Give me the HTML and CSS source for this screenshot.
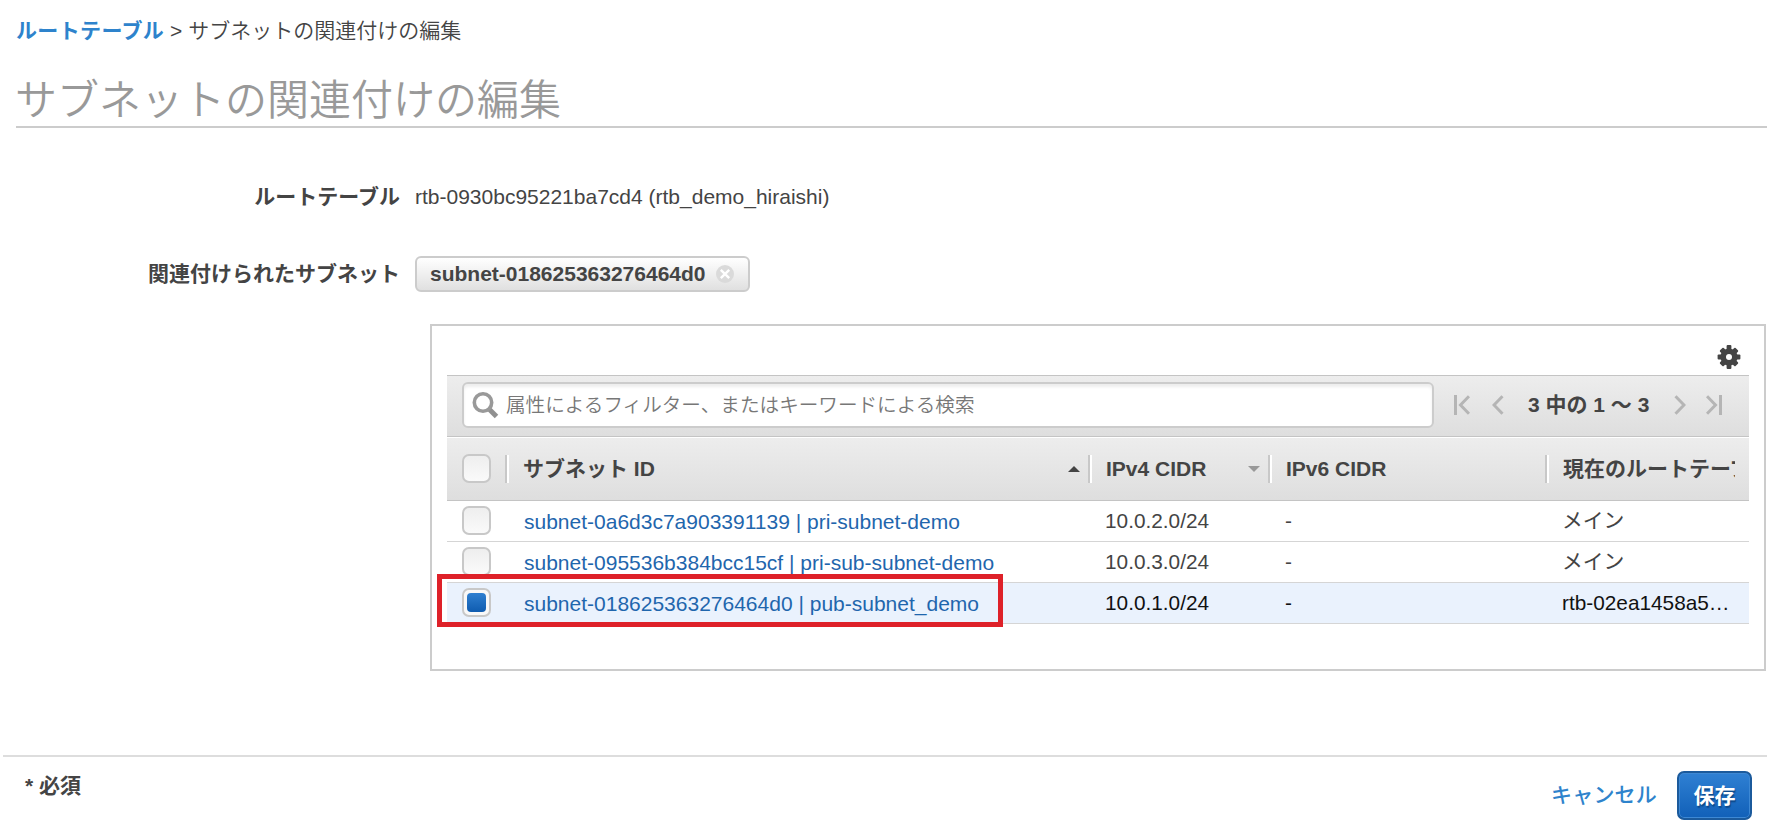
FILE: index.html
```html
<!DOCTYPE html>
<html lang="ja">
<head>
  <meta charset="UTF-8" />
  <meta name="viewport" content="width=device-width, initial-scale=1" />
  <title>サブネットの関連付けの編集</title>
  <link rel="stylesheet" href="styles.css">
</head>
<body>

  <main class="pagina">
    <nav class="breadcrumb"><a href="#">ルートテーブル</a> &gt; <span>サブネットの関連付けの編集</span></nav>
    <h1>サブネットの関連付けの編集</h1>

    <div class="campo">
      <div class="label">ルートテーブル</div>
      <div class="valor">rtb-0930bc95221ba7cd4 (rtb_demo_hiraishi)</div>
    </div>

    <div class="campo campo-tag">
      <div class="label">関連付けられたサブネット</div>
      <div class="tag">
        <span>subnet-018625363276464d0</span>
        <svg width="18" height="18" viewBox="0 0 18 18">
          <circle cx="9" cy="9" r="9" fill="#dadada" />
          <path d="M4.800 4.800l8.400 8.400M13.200 4.800l-8.400 8.400" stroke="#fff" stroke-width="2.4" />
        </svg>
      </div>
    </div>

    <section class="panel">
      <div class="panel-top">
        <svg width="24" height="26" viewBox="-12 -13 24 26">
          <g fill="#444">
            <rect x="-2.4" y="-12" width="4.8" height="24" rx="1" />
            <rect x="-11.4" y="-2.5" width="22.8" height="5" rx="1" />
            <rect x="-2.6" y="-11" width="5.2" height="22" rx="1" transform="rotate(45)" />
            <rect x="-2.6" y="-11" width="5.2" height="22" rx="1" transform="rotate(-45)" />
          </g>
          <circle r="5.8" fill="none" stroke="#444" stroke-width="5.6" />
          <circle r="3" fill="#fff" />
        </svg>
      </div>

      <div class="toolbar">
        <div class="buscador">
          <svg width="27" height="28" viewBox="0 0 27 28">
            <path d="M16.5 17.5l8 8" stroke="#909090" stroke-width="5" />
            <circle cx="11" cy="11.5" r="8.7" fill="none" stroke="#999" stroke-width="3.6" />
          </svg>
          <input type="text" placeholder="属性によるフィルター、またはキーワードによる検索" />
        </div>
        <div class="paginacion">
          <svg class="primero" width="16" height="20" viewBox="0 0 16 20"><path d="M1.5 0v20M15 1.2L6.5 10l8.5 8.8" /></svg>
          <svg class="anterior" width="12" height="20" viewBox="0 0 12 20"><path d="M10.5 1.2L2 10l8.5 8.8" /></svg>
          <span>3 中の 1 ～ 3</span>
          <svg class="siguiente" width="12" height="20" viewBox="0 0 12 20"><path d="M1.5 1.2L10 10l-8.5 8.8" /></svg>
          <svg class="ultimo" width="16" height="20" viewBox="0 0 16 20"><path d="M14.5 0v20M1 1.2L9.5 10L1 18.8" /></svg>
        </div>
      </div>

      <div class="tabla">
        <div class="fila cabecera">
          <div class="celda-check"><span class="check"></span></div>
          <div class="celda">サブネット ID<i class="orden arriba"></i></div>
          <div class="celda">IPv4 CIDR<i class="orden abajo"></i></div>
          <div class="celda">IPv6 CIDR</div>
          <div class="celda"><span class="corte">現在のルートテーブル</span></div>
        </div>
        <div class="fila">
          <div class="celda-check"><span class="check"></span></div>
          <div class="celda"><a href="#">subnet-0a6d3c7a903391139 | pri-subnet-demo</a></div>
          <div class="celda">10.0.2.0/24</div>
          <div class="celda">-</div>
          <div class="celda">メイン</div>
        </div>
        <div class="fila">
          <div class="celda-check"><span class="check"></span></div>
          <div class="celda"><a href="#">subnet-095536b384bcc15cf | pri-sub-subnet-demo</a></div>
          <div class="celda">10.0.3.0/24</div>
          <div class="celda">-</div>
          <div class="celda">メイン</div>
        </div>
        <div class="fila activa">
          <div class="celda-check"><span class="check marcado"></span></div>
          <div class="celda"><a href="#">subnet-018625363276464d0 | pub-subnet_demo</a></div>
          <div class="celda">10.0.1.0/24</div>
          <div class="celda">-</div>
          <div class="celda">rtb-02ea1458a5…</div>
          <div class="resaltado"></div>
        </div>
      </div>
    </section>
  </main>

  <footer class="pie">
    <div class="requerido">* 必須</div>
    <div class="acciones">
      <a href="#">キャンセル</a>
      <button class="btn-guardar">保存</button>
    </div>
  </footer>

</body>
</html>
```
FILE: styles.css
```css
* { box-sizing: border-box; }
body {
  font-family: "Liberation Sans", "Noto Sans CJK JP", sans-serif;
  font-size: 21px;
  line-height: 30px;
  color: #444;
  background: #fff;
  margin: 0;
  height: 836px;
  overflow: hidden;
}

a { text-decoration: none; }
svg { display: block; flex: none; }

.pagina {
  height: 755px;
  padding: 16px 1px 0 16px;
}

.breadcrumb a {
  color: #2e83cc;
  font-weight: 700;
  letter-spacing: 0.35px;
}
.breadcrumb span { font-weight: 350; }

h1 {
  margin: 22px -1px 0 0;
  height: 60px;
  padding-top: 3px;
  line-height: 60px;
  border-bottom: 2px solid #ccc;
  color: #999;
  font-size: 42px;
  font-weight: 350;
  text-indent: -1px;
}

.campo {
  display: grid;
  grid-template-columns: 384px 1fr;
  column-gap: 15px;
  align-items: center;
  margin-top: 54px;
}
.campo-tag {
  margin-top: 44px;
}
.label {
  text-align: right;
  font-weight: 700;
}

.tag {
  justify-self: start;
  display: flex;
  align-items: center;
  gap: 10px;
  width: 335px;
  height: 36px;
  padding-left: 13px;
  border: 2px solid #ccc;
  border-radius: 6px;
  background: linear-gradient(#fff, #e0e0e0);
  font-weight: 700;
}

.panel {
  width: 1336px;
  height: 347px;
  margin: 32px 0 0 414px;
  padding: 0 15px;
  border: 2px solid #ccc;
}
.panel-top {
  display: flex;
  justify-content: flex-end;
  height: 49px;
  padding: 18px 8px 0 0;
}

.toolbar {
  display: flex;
  height: 62px;
  padding: 6px 15px 0;
  border-top: 1px solid #c4c4c4;
  border-bottom: 1px solid #c4c4c4;
  background: linear-gradient(#ededed, #dedede);
}
.buscador {
  display: flex;
  align-items: center;
  width: 972px;
  height: 46px;
  padding-left: 8px;
  border: 2px solid #ccc;
  border-radius: 6px;
  background: #fff;
  box-shadow: inset 0 3px 3px #eee;
}
.buscador input {
  flex: 1;
  margin-left: 7px;
  padding: 0;
  border: none;
  outline: none;
  background: none;
  font-family: inherit;
  font-size: 19.6px;
  font-weight: 350;
}
.buscador input::placeholder { color: #777; }

.paginacion {
  display: flex;
  align-items: center;
  height: 46px;
  margin-left: 20px;
  font-weight: 700;
  white-space: nowrap;
}
.paginacion path {
  fill: none;
  stroke: #b5b5b5;
  stroke-width: 3;
}
.paginacion .anterior { margin-left: 22px; }
.paginacion span {
  width: 121px;
  margin: 0 25px 0 24px;
}
.paginacion .ultimo { margin-left: 20px; }

.fila {
  position: relative;
  display: grid;
  grid-template-columns: 60px 583px 180px 277px 1fr;
  align-items: center;
  height: 41px;
  border-bottom: 1px solid #d5d5d5;
}
.fila a {
  display: block;
  padding-top: 2px;
  color: #1f66ad;
}
.celda {
  padding-left: 15px;
  font-size: 20.8px;
  white-space: nowrap;
}
.fila .celda:nth-child(2) {
  padding-left: 17px;
  font-size: 21px;
}
.celda-check { padding: 0 0 1px 15px; }

.cabecera {
  height: 64px;
  border-top: 1px solid #fff;
  border-bottom-color: #c4c4c4;
  background: linear-gradient(#ededed, #dedede);
  font-weight: 700;
}
.cabecera .celda,
.cabecera .celda:nth-child(2) {
  display: flex;
  align-items: center;
  height: 28px;
  margin: -1px 0 0 -2px;
  padding-left: 16px;
  border-left: 2px solid #c8c8c8;
  box-shadow: inset 2px 0 #fff;
  font-size: 21px;
}
.corte {
  width: 172px;
  overflow: hidden;
}

.orden {
  margin-left: auto;
  margin-right: 10px;
  border: 6px solid transparent;
}
.orden.arriba {
  border-top: 0;
  border-bottom-color: #444;
}
.orden.abajo {
  border-bottom: 0;
  border-top-color: #999;
}

.check {
  display: block;
  width: 29px;
  height: 29px;
  border: 2px solid #c8c8c8;
  border-radius: 7px;
  background: linear-gradient(#eee, #fafafa);
}
.check.marcado {
  padding: 3px;
  background: #f8f8f8;
}
.check.marcado::before {
  content: "";
  display: block;
  height: 19px;
  border-radius: 4px;
  background: linear-gradient(#2f7fd0, #0f5cb0);
}

.activa {
  background: #eaf2fd;
  color: #111;
}
/* marco rojo sobre la fila seleccionada */
.resaltado {
  position: absolute;
  left: -10px;
  top: -9px;
  width: 566px;
  height: 53px;
  border: 5px solid #de2129;
}

.pie {
  display: flex;
  justify-content: space-between;
  height: 81px;
  margin-left: 3px;
  padding: 14px 15px 0 22px;
  border-top: 2px solid #ddd;
}
.requerido {
  font-weight: 700;
}
.acciones {
  display: flex;
  align-items: center;
  gap: 20px;
  height: 49px;
}
.acciones a {
  padding-bottom: 2px;
  color: #2e83cc;
  font-weight: 500;
  letter-spacing: 0.2px;
}
.btn-guardar {
  width: 75px;
  height: 49px;
  padding: 0 0 3px;
  border: 2px solid #1b5a9c;
  border-radius: 7px;
  background: linear-gradient(#2f80d3, #1160b8);
  box-shadow: inset 0 0 0 1px #3d88d4;
  color: #fff;
  font-family: inherit;
  font-size: 21px;
  font-weight: 700;
  text-shadow: 1px 2px 1px #0d4a8c;
}
```
